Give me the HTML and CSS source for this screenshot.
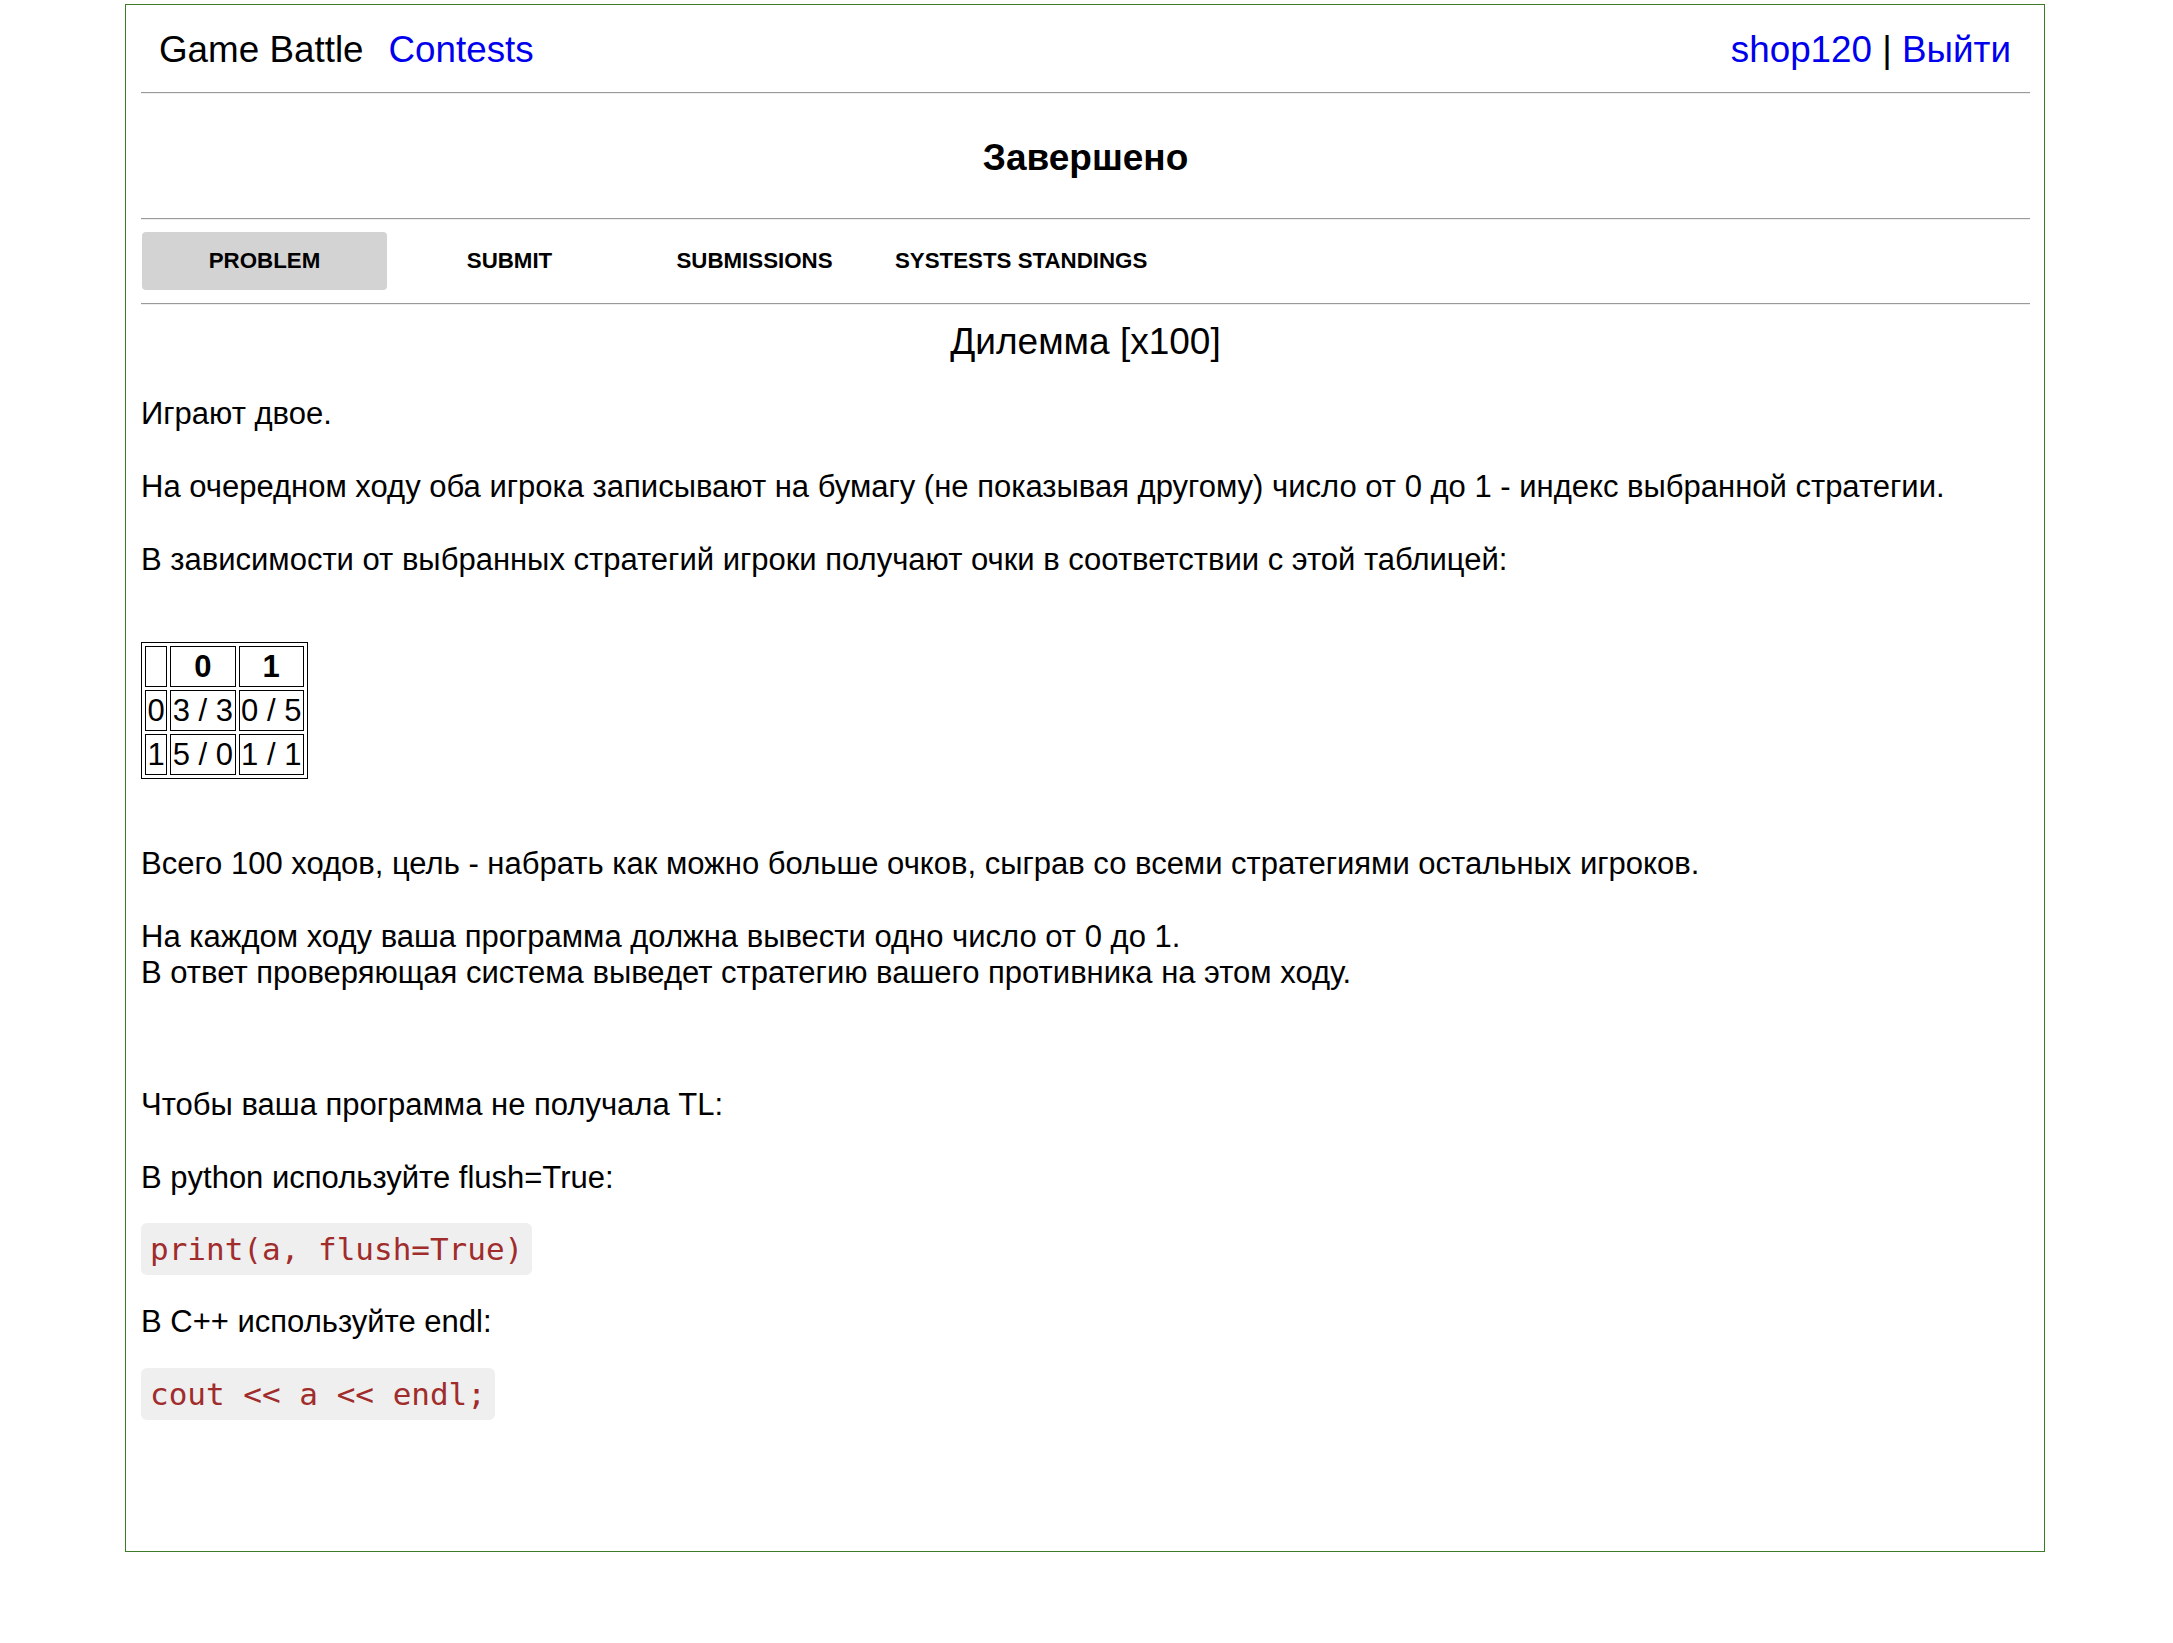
FILE: index.html
```html
<!DOCTYPE html>
<html lang="ru">
<head>
<meta charset="utf-8">
<title>Game Battle</title>
<link rel="stylesheet" href="styles.css">
</head>
<body>
<div class="page">
  <header class="topbar">
    <div class="brand"><span class="brand-name">Game Battle</span><a class="link" href="#">Contests</a></div>
    <div class="user"><a class="link" href="#">shop120</a> | <a class="link" href="#">Выйти</a></div>
  </header>
  <div class="rule"></div>
  <h1 class="status">Завершено</h1>
  <div class="rule"></div>
  <nav class="tabs">
    <a class="tab active" href="#">PROBLEM</a>
    <a class="tab" href="#">SUBMIT</a>
    <a class="tab" href="#">SUBMISSIONS</a>
    <a class="tab" href="#">SYSTESTS STANDINGS</a>
  </nav>
  <div class="rule"></div>
  <h2 class="title">Дилемма [x100]</h2>
  <div class="statement">
    <p class="p-first">Играют двое.</p>
    <p class="p-std">На очередном ходу оба игрока записывают на бумагу (не показывая другому) число от 0 до 1 - индекс выбранной стратегии.</p>
    <p class="p-std">В зависимости от выбранных стратегий игроки получают очки в соответствии с этой таблицей:</p>
    <table class="payoff">
      <tr><th></th><th>0</th><th>1</th></tr>
      <tr><td>0</td><td>3 / 3</td><td>0 / 5</td></tr>
      <tr><td>1</td><td>5 / 0</td><td>1 / 1</td></tr>
    </table>
    <p class="p-after-table">Всего 100 ходов, цель - набрать как можно больше очков, сыграв со всеми стратегиями остальных игроков.</p>
    <p class="p-std">На каждом ходу ваша программа должна вывести одно число от 0 до 1.<br>В ответ проверяющая система выведет стратегию вашего противника на этом ходу.</p>
    <p class="p-big">Чтобы ваша программа не получала TL:</p>
    <p class="p-python">В python используйте flush=True:</p>
    <pre class="code code-py">print(a, flush=True)</pre>
    <p class="p-cpp">В C++ используйте endl:</p>
    <pre class="code code-cpp">cout &lt;&lt; a &lt;&lt; endl;</pre>
  </div>
</div>
</body>
</html>
```
FILE: styles.css
```css
html, body {
  margin: 0;
  padding: 0;
  background: #ffffff;
}

body {
  font-family: "Liberation Sans", Arial, Helvetica, sans-serif;
  color: #000000;
}

.page {
  box-sizing: border-box;
  width: 1920px;
  margin: 4px 0 0 125px;
  border: 1px solid #3e7b27;
  padding: 0 14px 131px 15px;
}

.topbar {
  box-sizing: border-box;
  height: 87px;
  padding: 24px 19px 0 18px;
  display: flex;
  justify-content: space-between;
  align-items: flex-start;
  font-size: 36.8px;
  line-height: 42px;
}

.brand {
  display: flex;
}

.brand-name {
  margin-right: 25px;
}

.link {
  color: #0000ee;
  text-decoration: none;
}

.rule {
  border-top: 1px solid #9a9a9a;
  border-bottom: 1px solid #eeeeee;
}

.status {
  margin: 43px 0 39px;
  font-size: 37px;
  line-height: 42px;
  font-weight: bold;
  text-align: center;
}

.tabs {
  display: flex;
  margin: 12px 0 13px;
  padding-left: 1px;
}

.tab {
  box-sizing: border-box;
  min-width: 245px;
  height: 58px;
  padding: 0 18px;
  display: flex;
  align-items: center;
  justify-content: center;
  font-size: 22.3px;
  font-weight: bold;
  color: #000000;
  text-decoration: none;
  border-radius: 4px;
}

.tab.active {
  background: #d3d3d3;
}

.title {
  margin: 16px 0 33px;
  font-size: 37px;
  line-height: 42px;
  font-weight: normal;
  text-align: center;
}

.statement {
  font-size: 31px;
  line-height: 36px;
}

.statement p {
  margin: 0;
}

.statement .p-std {
  margin-top: 37px;
}

.statement .p-after-table {
  margin-top: 67px;
}

.statement .p-big {
  margin-top: 96px;
}

.statement .p-python {
  margin-top: 37px;
}

.statement .p-cpp {
  margin-top: 29px;
}

.payoff {
  margin-top: 64px;
  border: 1px solid #000000;
  border-collapse: separate;
  border-spacing: 3px;
  font-size: 31px;
  line-height: 36px;
}

.payoff th,
.payoff td {
  border: 1px solid #000000;
  padding: 1.5px;
  text-align: center;
}

.payoff th {
  font-weight: bold;
}

.code {
  width: fit-content;
  margin: 0;
  padding: 8px 9px;
  background: #efefef;
  border-radius: 6px;
  font-family: "DejaVu Sans Mono", "Liberation Mono", monospace;
  font-size: 31px;
  line-height: 36px;
  color: #a02c2c;
  white-space: pre;
}

.code-py {
  margin-top: 27px;
}

.code-cpp {
  margin-top: 28px;
}
```
